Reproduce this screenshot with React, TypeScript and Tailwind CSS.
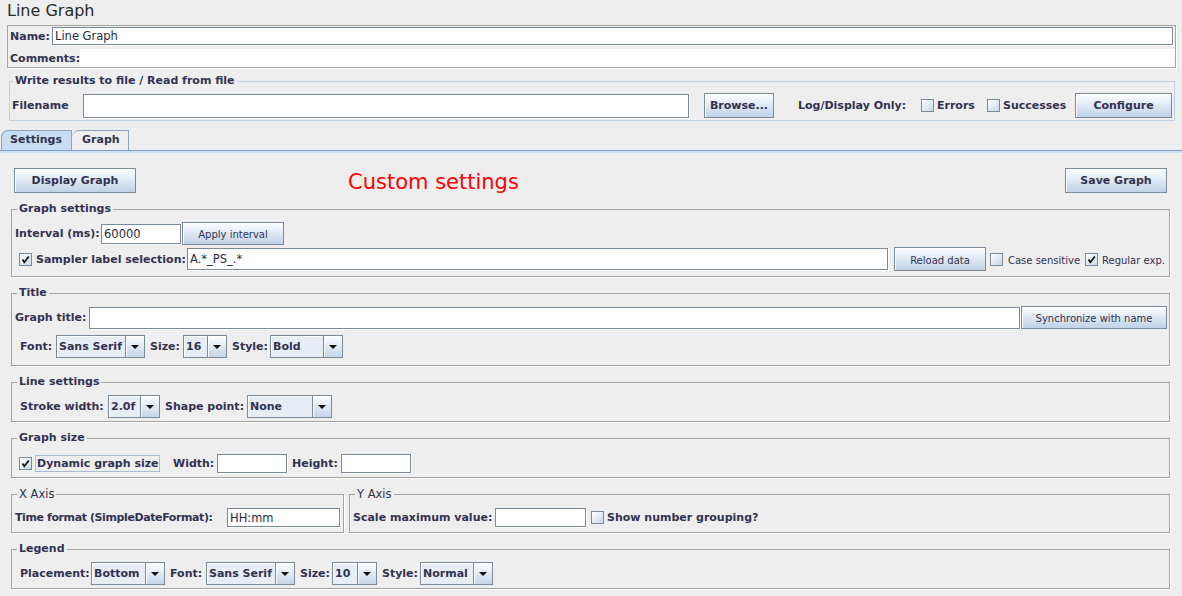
import React from "react";

type Kids = { className?: string; children?: React.ReactNode };

function Button({ className = "", children, small = false }: Kids & { small?: boolean }) {
  return (
    <div
      className={`flex shrink-0 items-center justify-center whitespace-nowrap border border-[#7a8a99] bg-linear-to-b from-[#fdfeff] to-[#bfd2e6] pt-[2px] shadow-[inset_1px_1px_0_#ffffff] ${
        small ? "text-[10px] font-normal" : "text-[11px] font-bold"
      } ${className}`}
    >
      {children}
    </div>
  );
}

function Field({ className = "", children }: Kids) {
  return (
    <div
      className={`flex shrink-0 items-center overflow-hidden whitespace-nowrap border border-[#7a8a99] bg-white pl-[2px] pt-[2px] text-[11.5px] font-normal text-[#2a2a3a] shadow-[1px_1px_0_#ffffff] ${className}`}
    >
      {children}
    </div>
  );
}

function Combo({ className = "", value }: { className?: string; value: string }) {
  return (
    <div className={`flex h-[23px] shrink-0 border border-[#7a8a99] ${className}`}>
      <div className="flex flex-1 items-center whitespace-nowrap border-r border-[#7a8a99] bg-[#e6edf5] pl-[2px] pt-[2px] text-[11px] font-bold shadow-[inset_1px_1px_0_#ffffff]">
        {value}
      </div>
      <div className="flex w-[18px] items-center justify-center bg-linear-to-b from-[#fdfeff] to-[#c3d5e8] shadow-[inset_1px_1px_0_#ffffff]">
        <svg width="8" height="4" viewBox="0 0 8 4">
          <path d="M0 0H8L4 4Z" fill="#111" />
        </svg>
      </div>
    </div>
  );
}

function Check({ checked = false, className = "" }: { checked?: boolean; className?: string }) {
  return (
    <div
      className={`flex h-[13px] w-[13px] shrink-0 items-center justify-center border border-[#7a8a99] bg-linear-to-br from-[#ffffff] to-[#c6d7e9] ${className}`}
    >
      {checked && (
        <svg width="11" height="11" viewBox="0 0 11 11">
          <path d="M2.5 5.5L4.3 8.3L8.8 2.5" stroke="#111" strokeWidth="1.7" fill="none" />
        </svg>
      )}
    </div>
  );
}

function Label({ className = "", children }: Kids) {
  return <span className={`shrink-0 whitespace-nowrap pt-[2px] text-[11px] font-bold ${className}`}>{children}</span>;
}

function Group({ title, className = "", plain = false, children }: Kids & { title: string; plain?: boolean }) {
  return (
    <fieldset className={`border border-[#a3a3a3] p-0 shadow-[1px_1px_0_#ffffff] ${className}`}>
      <legend
        className={`ml-[5px] px-[2px] leading-[14px] ${plain ? "text-[11.5px] font-normal" : "text-[11px] font-bold"}`}
      >
        {title}
      </legend>
      {children}
    </fieldset>
  );
}

export default function App() {
  return (
    <div className="h-[596px] w-[1182px] overflow-hidden bg-[#eeeeee] font-['DejaVu_Sans',sans-serif] text-[#323250]">
      <div className="h-[25px] pl-[7px] pt-[1px] text-[16px] leading-[20px] text-[#2a2a2a]">Line Graph</div>

      <div className="ml-[7px] flex h-[43px] w-[1169px] flex-col gap-[4px] border border-[#a3a3a3] pl-[2px] pt-[1px] shadow-[1px_1px_0_#ffffff]">
        <div className="flex h-[18px] items-center pr-[2px]">
          <Label className="w-[42px]">Name:</Label>
          <Field className="h-[18px] flex-1">Line Graph</Field>
        </div>
        <div className="flex h-[18px] items-center">
          <Label className="w-[70px]">Comments:</Label>
          <div className="h-[18px] flex-1 bg-white" />
        </div>
      </div>

      <fieldset className="ml-[9px] mt-[6px] w-[1166px] border border-[#b8cfe5] p-0 pb-[2px] pt-[5px]">
        <legend className="ml-[3px] px-[2px] text-[11px] font-bold leading-[14px]">
          Write results to file / Read from file
        </legend>
        <div className="flex h-[25px] items-center pl-[2px]">
          <Label className="w-[71px]">Filename</Label>
          <Field className="h-[24px] w-[606px]" />
          <Button className="ml-[15px] h-[25px] w-[70px]">Browse...</Button>
          <Label className="ml-[24px] w-[123px]">Log/Display Only:</Label>
          <Check />
          <Label className="ml-[3px] w-[50px]">Errors</Label>
          <Check />
          <Label className="ml-[3px] w-[72px]">Successes</Label>
          <Button className="h-[25px] w-[97px]">Configure</Button>
        </div>
      </fieldset>

      <div className="mt-[9px] flex h-[20px] items-end pl-[1px]">
        <div className="flex h-[20px] w-[71px] items-center rounded-tl-[7px] border border-b-0 border-[#8ea3ba] bg-[#c8ddf2] pl-[8px] text-[11px] font-bold">
          Settings
        </div>
        <div className="flex h-[20px] w-[57px] items-center rounded-tl-[7px] border border-b-0 border-l-0 border-[#8ea3ba] pl-[10px] text-[11px] font-bold">
          Graph
        </div>
      </div>
      <div className="h-[1px] bg-[#7c9bcf]" />
      <div className="h-[2px] bg-[#d3e2f2]" />

      <div className="ml-[14px] mt-[15px] flex h-[25px] w-[1153px] items-center">
        <Button className="h-[25px] w-[122px]">Display Graph</Button>
        <span className="ml-[212px] whitespace-nowrap pt-[3px] text-[21px] leading-[25px] text-[#ff0000]">
          Custom settings
        </span>
        <div className="flex-1" />
        <Button className="h-[25px] w-[102px]">Save Graph</Button>
      </div>

      <Group title="Graph settings" className="ml-[11px] mt-[9px] w-[1159px] pb-[5px] pt-[6px]">
        <div className="flex h-[23px] items-center pl-[3px]">
          <Label className="w-[86px]">Interval (ms):</Label>
          <Field className="h-[20px] w-[80px]">60000</Field>
          <Button small className="ml-[1px] h-[23px] w-[102px]">
            Apply interval
          </Button>
        </div>
        <div className="mt-[2px] flex h-[24px] items-center pl-[7px]">
          <Check checked />
          <Label className="ml-[4px] w-[151px]">Sampler label selection:</Label>
          <Field className="h-[22px] w-[701px]">A.*_PS_.*</Field>
          <Button small className="ml-[6px] h-[24px] w-[92px]">
            Reload data
          </Button>
          <Check className="ml-[4px]" />
          <span className="ml-[5px] w-[72px] shrink-0 whitespace-nowrap pt-[2px] text-[10px]">Case sensitive</span>
          <Check checked className="ml-[5px]" />
          <span className="ml-[4px] shrink-0 whitespace-nowrap pt-[2px] text-[10px]">Regular exp.</span>
        </div>
      </Group>

      <Group title="Title" className="ml-[11px] mt-[9px] w-[1159px] pb-[7px] pt-[6px]">
        <div className="flex h-[23px] items-center pl-[3px]">
          <Label className="w-[74px]">Graph title:</Label>
          <Field className="h-[22px] w-[931px]" />
          <Button small className="ml-[1px] h-[23px] w-[146px]">
            Synchronize with name
          </Button>
        </div>
        <div className="mt-[6px] flex h-[23px] items-center pl-[8px]">
          <Label className="w-[36px]">Font:</Label>
          <Combo className="w-[89px]" value="Sans Serif" />
          <Label className="ml-[5px] w-[33px]">Size:</Label>
          <Combo className="w-[44px]" value="16" />
          <Label className="ml-[5px] w-[38px]">Style:</Label>
          <Combo className="w-[73px]" value="Bold" />
        </div>
      </Group>

      <Group title="Line settings" className="ml-[11px] mt-[9px] w-[1159px] pb-[3px] pt-[6px]">
        <div className="flex h-[23px] items-center pl-[8px]">
          <Label className="w-[88px]">Stroke width:</Label>
          <Combo className="w-[52px]" value="2.0f" />
          <Label className="ml-[5px] w-[82px]">Shape point:</Label>
          <Combo className="w-[85px]" value="None" />
        </div>
      </Group>

      <Group title="Graph size" className="ml-[11px] mt-[9px] w-[1159px] pb-[4px] pt-[9px]">
        <div className="flex h-[19px] items-center pl-[7px]">
          <Check checked />
          <div className="ml-[3px] flex h-[17px] w-[125px] shrink-0 items-center border border-[#a8bdd3] pl-[1px]">
            <Label>Dynamic graph size</Label>
          </div>
          <Label className="ml-[13px] w-[44px]">Width:</Label>
          <Field className="h-[19px] w-[70px]" />
          <Label className="ml-[5px] w-[49px]">Height:</Label>
          <Field className="h-[19px] w-[70px]" />
        </div>
      </Group>

      <div className="mt-[9px] flex">
        <Group plain title="X Axis" className="ml-[11px] w-[333px] pb-[5px] pt-[7px]">
          <div className="flex h-[19px] items-center pl-[3px]">
            <Label className="w-[212px] tracking-[-0.4px]">Time format (SimpleDateFormat):</Label>
            <Field className="h-[19px] w-[113px]">HH:mm</Field>
          </div>
        </Group>
        <Group plain title="Y Axis" className="ml-[5px] w-[821px] pb-[5px] pt-[7px]">
          <div className="flex h-[19px] items-center pl-[3px]">
            <Label className="w-[142px]">Scale maximum value:</Label>
            <Field className="h-[19px] w-[91px]" />
            <Check className="ml-[5px]" />
            <Label className="ml-[3px]">Show number grouping?</Label>
          </div>
        </Group>
      </div>

      <Group title="Legend" className="ml-[11px] mt-[9px] w-[1159px] pb-[3px] pt-[6px]">
        <div className="flex h-[23px] items-center pl-[8px]">
          <Label className="w-[71px]">Placement:</Label>
          <Combo className="w-[74px]" value="Bottom" />
          <Label className="ml-[5px] w-[36px]">Font:</Label>
          <Combo className="w-[89px]" value="Sans Serif" />
          <Label className="ml-[5px] w-[32px]">Size:</Label>
          <Combo className="w-[45px]" value="10" />
          <Label className="ml-[5px] w-[38px]">Style:</Label>
          <Combo className="w-[73px]" value="Normal" />
        </div>
      </Group>
    </div>
  );
}
